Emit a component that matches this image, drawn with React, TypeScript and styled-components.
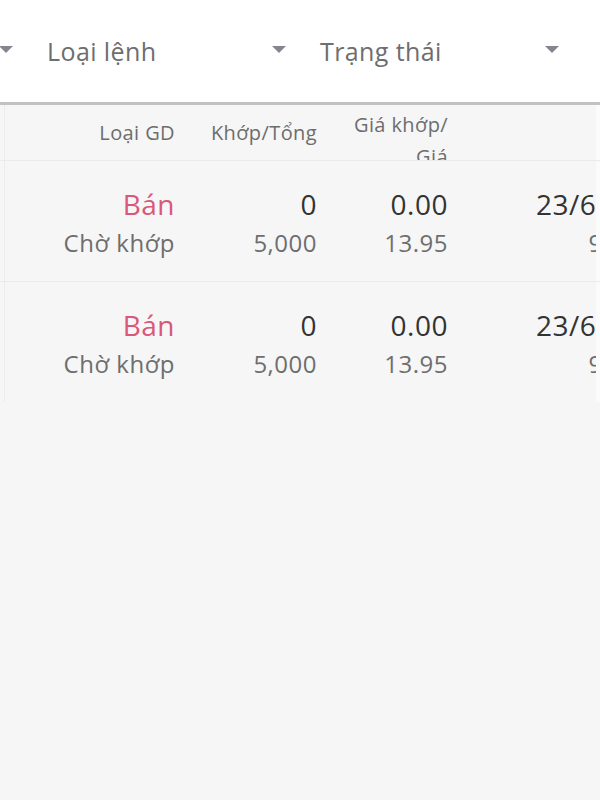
import styled, { createGlobalStyle } from 'styled-components'

const GlobalStyle = createGlobalStyle`
  html, body {
    margin: 0;
    padding: 0;
    background: #f6f6f6;
    font-family: "Open Sans", Lato, "Noto Sans", sans-serif;
  }
  #root {
    min-height: 800px;
    background: #f6f6f6;
  }
`

const Page = styled.div`
  width: 600px;
  height: 800px;
  overflow: hidden;
  display: flex;
  flex-direction: column;
  background: #f6f6f6;
`

const FilterBar = styled.div`
  height: 102px;
  background: #ffffff;
  overflow: hidden;
  border-bottom: 3px solid #c2c2c2;
  display: flex;
  align-items: center;
`

const FilterTrack = styled.div`
  display: flex;
  gap: 8px;
  margin-left: -242px;
`

const Filter = styled.div`
  width: 265px;
  flex: none;
  box-sizing: border-box;
  padding: 0 10px 0 16px;
  display: flex;
  align-items: center;
  justify-content: space-between;
  font-size: 25px;
  letter-spacing: 0.4px;
  color: #6e6e6e;
`

const Caret = styled.span`
  width: 0;
  height: 0;
  border-left: 7px solid transparent;
  border-right: 7px solid transparent;
  border-top: 7px solid #85858f;
  margin-top: -4px;
`

const Grid = styled.div<{ $height: number; $border?: boolean }>`
  display: grid;
  grid-template-columns: 5px 170px 142px 131px 148px 1fr;
  grid-template-rows: ${({ $height }) => $height}px;
  height: ${({ $height }) => $height}px;
  border-bottom: ${({ $border }) => ($border ? '1px solid #ebebeb' : 'none')};
  overflow: hidden;
`

const Gutter = styled.div`
  border-right: 1px solid #ececec;
`

const Edge = styled.div`
  background: #fbfbfb;
`

const HeadCell = styled.div<{ $top?: boolean }>`
  display: flex;
  flex-direction: column;
  align-items: flex-end;
  justify-content: ${({ $top }) => ($top ? 'flex-start' : 'center')};
  padding-top: ${({ $top }) => ($top ? '4px' : '0')};
  overflow: hidden;
  font-size: 20px;
  line-height: 32px;
  letter-spacing: 0.4px;
  color: #6d6d6d;
  white-space: nowrap;
`

const Cell = styled.div`
  display: flex;
  flex-direction: column;
  align-items: flex-end;
  padding-top: 26px;
  white-space: nowrap;
`

const DateCell = styled.div`
  overflow: hidden;
  padding: 26px 0 0 88px;
`

const DateStack = styled.div`
  display: inline-flex;
  flex-direction: column;
  align-items: flex-end;
  white-space: nowrap;
`

const Main = styled.div<{ $tone?: 'sell' }>`
  font-size: 28px;
  line-height: 34px;
  letter-spacing: 0.5px;
  color: ${({ $tone }) => ($tone === 'sell' ? '#d9587a' : '#333333')};
`

const Sub = styled.div`
  font-size: 24px;
  line-height: 44px;
  letter-spacing: 0.5px;
  color: #6e6e6e;
`

const orders = [
  { side: 'Bán', status: 'Chờ khớp', matched: '0', total: '5,000', matchPrice: '0.00', price: '13.95', date: '23/6/2023', time: '9:15:32' },
  { side: 'Bán', status: 'Chờ khớp', matched: '0', total: '5,000', matchPrice: '0.00', price: '13.95', date: '23/6/2023', time: '9:14:08' },
]

export default function App() {
  return (
    <Page>
      <GlobalStyle />
      <FilterBar>
        <FilterTrack>
          <Filter>
            <span>Tài khoản</span>
            <Caret />
          </Filter>
          <Filter>
            <span>Loại lệnh</span>
            <Caret />
          </Filter>
          <Filter>
            <span>Trạng thái</span>
            <Caret />
          </Filter>
        </FilterTrack>
      </FilterBar>

      <Grid $height={55} $border>
        <Gutter />
        <HeadCell>Loại GD</HeadCell>
        <HeadCell>Khớp/Tổng</HeadCell>
        <HeadCell $top>
          <span>Giá khớp/</span>
          <span>Giá</span>
          <span>đặt</span>
        </HeadCell>
        <HeadCell />
        <Edge />
      </Grid>

      {orders.map((o, i) => (
        <Grid key={i} $height={120} $border={i < orders.length - 1}>
          <Gutter />
          <Cell>
            <Main $tone="sell">{o.side}</Main>
            <Sub>{o.status}</Sub>
          </Cell>
          <Cell>
            <Main>{o.matched}</Main>
            <Sub>{o.total}</Sub>
          </Cell>
          <Cell>
            <Main>{o.matchPrice}</Main>
            <Sub>{o.price}</Sub>
          </Cell>
          <DateCell>
            <DateStack>
              <Main>{o.date}</Main>
              <Sub>{o.time}</Sub>
            </DateStack>
          </DateCell>
          <Edge />
        </Grid>
      ))}
    </Page>
  )
}
